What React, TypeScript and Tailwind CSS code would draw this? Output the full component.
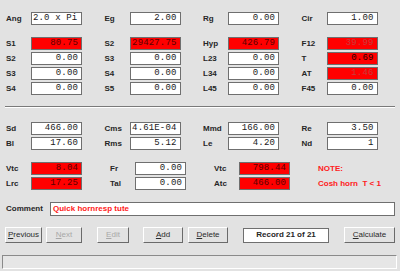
import React from "react";

type Cell = { label: string; value: string; red?: boolean; tone?: string; left?: boolean };

function Field({ label, value, red, tone, left }: Cell) {
    return (
        <div className="flex items-center w-[104px] h-[13px]">
            <span className="w-[25px] text-[8px] font-bold text-[#262626] leading-none">{label}</span>
            <div
                className={`w-[51px] h-[13px] flex items-center border border-[#6f6f6f] pl-[1px] pr-[3px] overflow-hidden ${left ? "justify-start" : "justify-end"} ${red ? "bg-[#ff0000]" : "bg-white"}`}
            >
                <span
                    className={`text-[9px] leading-none tracking-[0.15px] whitespace-pre ${tone ?? "text-[#1a1a1a]"}`}
                    style={{ fontFamily: '"Liberation Mono", monospace' }}
                >
                    {value}
                </span>
            </div>
        </div>
    );
}

function Row({ cells }: { cells: Cell[] }) {
    return (
        <div className="flex">
            {cells.map((c, i) => (
                <Field key={i} {...c} />
            ))}
        </div>
    );
}

function Btn({ children, w, disabled }: { children: React.ReactNode; w: string; disabled?: boolean }) {
    return (
        <div
            className={`${w} h-[16px] flex items-center justify-center border border-t-white border-l-white border-b-[#6a6a6a] border-r-[#6a6a6a] text-[8px] leading-none ${disabled ? "text-[#a8a8a8]" : "text-[#2a2a2a]"}`}
        >
            {children}
        </div>
    );
}

export default function App() {
    return (
        <div
            className="w-[400px] h-[271px] bg-[#e2e2e2] overflow-hidden pt-[12px]"
            style={{ fontFamily: '"Liberation Sans", Arial, sans-serif' }}
        >
            <div className="pl-[6px]">
                <Row
                    cells={[
                        { label: "Ang", value: "2.0 x Pi", left: true },
                        { label: "Eg", value: "2.00" },
                        { label: "Rg", value: "0.00" },
                        { label: "Cir", value: "1.00" },
                    ]}
                />
                <div className="mt-[12px] flex flex-col gap-[2px]">
                    <Row
                        cells={[
                            { label: "S1", value: "80.75", red: true, tone: "text-[#5c0000]" },
                            { label: "S2", value: "29427.75", red: true, tone: "text-[#5c0000]" },
                            { label: "Hyp", value: "426.79", red: true, tone: "text-[#5c0000]" },
                            { label: "F12", value: "39.99", red: true, tone: "text-[#c83c3c]" },
                        ]}
                    />
                    <Row
                        cells={[
                            { label: "S2", value: "0.00" },
                            { label: "S3", value: "0.00" },
                            { label: "L23", value: "0.00" },
                            { label: "T", value: "0.69", red: true, tone: "text-[#2a0000]" },
                        ]}
                    />
                    <Row
                        cells={[
                            { label: "S3", value: "0.00" },
                            { label: "S4", value: "0.00" },
                            { label: "L34", value: "0.00" },
                            { label: "AT", value: "1.46", red: true, tone: "text-[#c83c3c]" },
                        ]}
                    />
                    <Row
                        cells={[
                            { label: "S4", value: "0.00" },
                            { label: "S5", value: "0.00" },
                            { label: "L45", value: "0.00" },
                            { label: "F45", value: "0.00" },
                        ]}
                    />
                </div>
            </div>

            {/* separator */}
            <div className="mx-[5px] mt-[11px] h-[2px] border-t border-t-[#7a7a7a] border-b border-b-white" />

            <div className="pl-[6px] mt-[14px]">
                <div className="flex flex-col gap-[2px]">
                    <Row
                        cells={[
                            { label: "Sd", value: "466.00" },
                            { label: "Cms", value: "4.61E-04" },
                            { label: "Mmd", value: "166.00" },
                            { label: "Re", value: "3.50" },
                        ]}
                    />
                    <Row
                        cells={[
                            { label: "Bl", value: "17.60" },
                            { label: "Rms", value: "5.12" },
                            { label: "Le", value: "4.20" },
                            { label: "Nd", value: "1" },
                        ]}
                    />
                </div>
                <div className="mt-[12px] flex">
                    <div className="flex flex-col gap-[2px]">
                        <Field label="Vtc" value="8.04" red tone="text-[#5c0000]" />
                        <Field label="Lrc" value="17.25" red tone="text-[#5c0000]" />
                    </div>
                    <div className="flex flex-col gap-[2px]">
                        <Field label="Fr" value="0.00" />
                        <Field label="Tal" value="0.00" />
                    </div>
                    <div className="flex flex-col gap-[2px]">
                        <Field label="Vtc" value="798.44" red tone="text-[#5c0000]" />
                        <Field label="Atc" value="466.00" red tone="text-[#5c0000]" />
                    </div>
                    <div className="flex flex-col gap-[2px] text-[8px] font-bold text-[#ff2020] leading-none">
                        <div className="h-[13px] flex items-center">NOTE:</div>
                        <div className="h-[13px] flex items-center">Cosh horn&nbsp; T &lt; 1</div>
                    </div>
                </div>
            </div>

            <div className="mt-[12px] pl-[6px] flex items-center">
                <span className="w-[44px] text-[8px] font-bold text-[#262626] leading-none">Comment</span>
                <div className="w-[345px] h-[14px] bg-white border border-[#6f6f6f] flex items-center px-[2px]">
                    <span className="text-[8px] font-bold text-[#ff2020] leading-none">Quick hornresp tute</span>
                </div>
            </div>

            <div className="mt-[11px] pl-[5px] flex items-center">
                <Btn w="w-[37px]">
                    <span><u>P</u>revious</span>
                </Btn>
                <div className="ml-[4px]">
                    <Btn w="w-[36px]" disabled>
                        <span><u>N</u>ext</span>
                    </Btn>
                </div>
                <div className="ml-[15px]">
                    <Btn w="w-[32px]" disabled>
                        <span><u>E</u>dit</span>
                    </Btn>
                </div>
                <div className="ml-[14px]">
                    <Btn w="w-[40px]">
                        <span><u>A</u>dd</span>
                    </Btn>
                </div>
                <div className="ml-[5px]">
                    <Btn w="w-[40px]">
                        <span><u>D</u>elete</span>
                    </Btn>
                </div>
                <div className="ml-[15px] w-[86px] h-[15px] bg-white border border-[#6f6f6f] flex items-center justify-center text-[8px] font-bold text-[#262626] leading-none">
                    Record 21 of 21
                </div>
                <div className="ml-[15px]">
                    <Btn w="w-[51px]">
                        <span><u>C</u>alculate</span>
                    </Btn>
                </div>
            </div>

            <div className="mt-[12px] mx-[2px] w-[395px] h-[14px] border border-t-[#8a8a8a] border-l-[#8a8a8a] border-b-white border-r-white bg-[#e6e6e6]" />
        </div>
    );
}
